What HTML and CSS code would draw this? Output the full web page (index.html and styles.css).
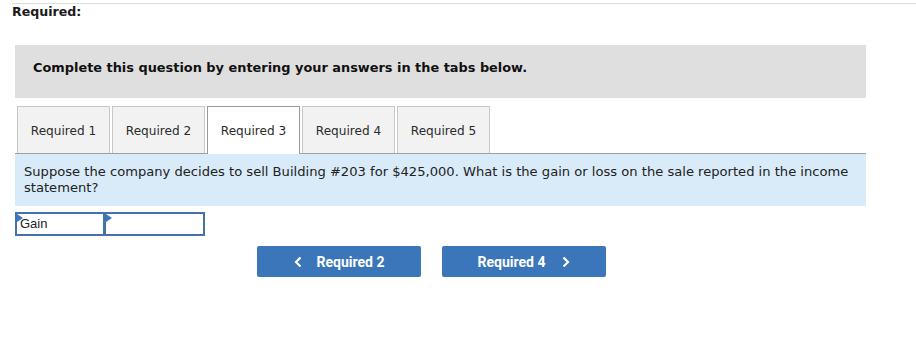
FILE: index.html
```html
<!DOCTYPE html>
<html>
<head>
<meta charset="utf-8">
<link rel="stylesheet" href="styles.css">
</head>
<body>
<div class="rule"></div>
<div class="req-title">Required:</div>
<div class="instructions">Complete this question by entering your answers in the tabs below.</div>
<div class="tabs">
  <div class="tab">Required 1</div>
  <div class="tab">Required 2</div>
  <div class="tab active">Required 3</div>
  <div class="tab">Required 4</div>
  <div class="tab">Required 5</div>
</div>
<div class="question">Suppose the company decides to sell Building #203 for $425,000. What is the gain or loss on the sale reported in the income statement?</div>
<div class="answers">
  <div class="cell first"><span class="mark"></span>Gain</div>
  <div class="cell second"><span class="mark"></span></div>
</div>
<div class="nav">
  <div class="btn"><svg class="chev" width="8" height="12" viewBox="0 0 8 12"><path d="M6.5 1.5 L2 6 L6.5 10.5" fill="none" stroke="#fff" stroke-width="2.2"/></svg><span>Required 2</span></div>
  <div class="btn next"><span>Required 4</span><svg class="chev" width="8" height="12" viewBox="0 0 8 12"><path d="M1.5 1.5 L6 6 L1.5 10.5" fill="none" stroke="#fff" stroke-width="2.2"/></svg></div>
</div>
</body>
</html>
```
FILE: styles.css
```css
html, body { margin: 0; padding: 0; background: #fff; }
body { font-family: "DejaVu Sans", Verdana, sans-serif; color: #222; width: 916px; height: 342px; overflow: hidden; }
.rule { margin: 3px 0 0 12px; border-top: 1px solid #dcdcdc; height: 0; }
.req-title { margin-left: 12px; font-weight: bold; font-size: 12.6px; line-height: 16px; height: 41px; color: #1a1a1a; }
.instructions { margin-left: 15px; width: 833px; height: 50px; background: #dfdfdf; padding: 3px 0 0 18px; font-weight: bold; font-size: 12.9px; line-height: 40px; color: #111; box-sizing: content-box; }
.tabs { display: flex; gap: 2px; margin: 8px 0 0 17px; height: 47px; align-items: flex-start; }
.tab { width: 91px; box-sizing: content-box; border: 1px solid #c8c8c8; border-bottom: none; background: #f2f2f2; font-size: 12.1px; line-height: 16px; text-align: center; color: #2b2b2b; height: 30px; padding-top: 16px; }
.tab.active { background: #fff; border-color: #999; height: 31px; position: relative; z-index: 1; }
.question { margin-left: 15px; width: 833px; border-top: 1px solid #a0a0a0; background: #d9ebf8; padding: 10px 9px 11px 9px; font-size: 13.1px; line-height: 16px; color: #222; box-sizing: content-box; height: 31px; }
.answers { display: flex; margin: 6px 0 0 15px; height: 24px; }
.cell { position: relative; height: 20px; border: 2px solid #4672a8; font-family: "Liberation Sans", Arial, sans-serif; font-size: 13px; line-height: 20px; padding-left: 3px; color: #222; }
.cell.first { width: 83px; }
.cell.second { width: 94px; margin-left: -1px; }
.mark { position: absolute; left: 0; top: 0; width: 0; height: 0; border-top: 4px solid transparent; border-bottom: 4px solid transparent; border-left: 6px solid #3b78c2; }
.nav { display: flex; gap: 21px; margin: 10px 0 0 257px; }
.btn { width: 164px; height: 31px; background: #3a76b9; border-radius: 2px; color: #fff; font-family: Roboto, "Liberation Sans", sans-serif; font-weight: bold; font-size: 14px; display: flex; align-items: center; justify-content: center; gap: 15px; }
.chev { display: block; }
.btn span { display: block; }
.btn.next { gap: 17px; }
```
